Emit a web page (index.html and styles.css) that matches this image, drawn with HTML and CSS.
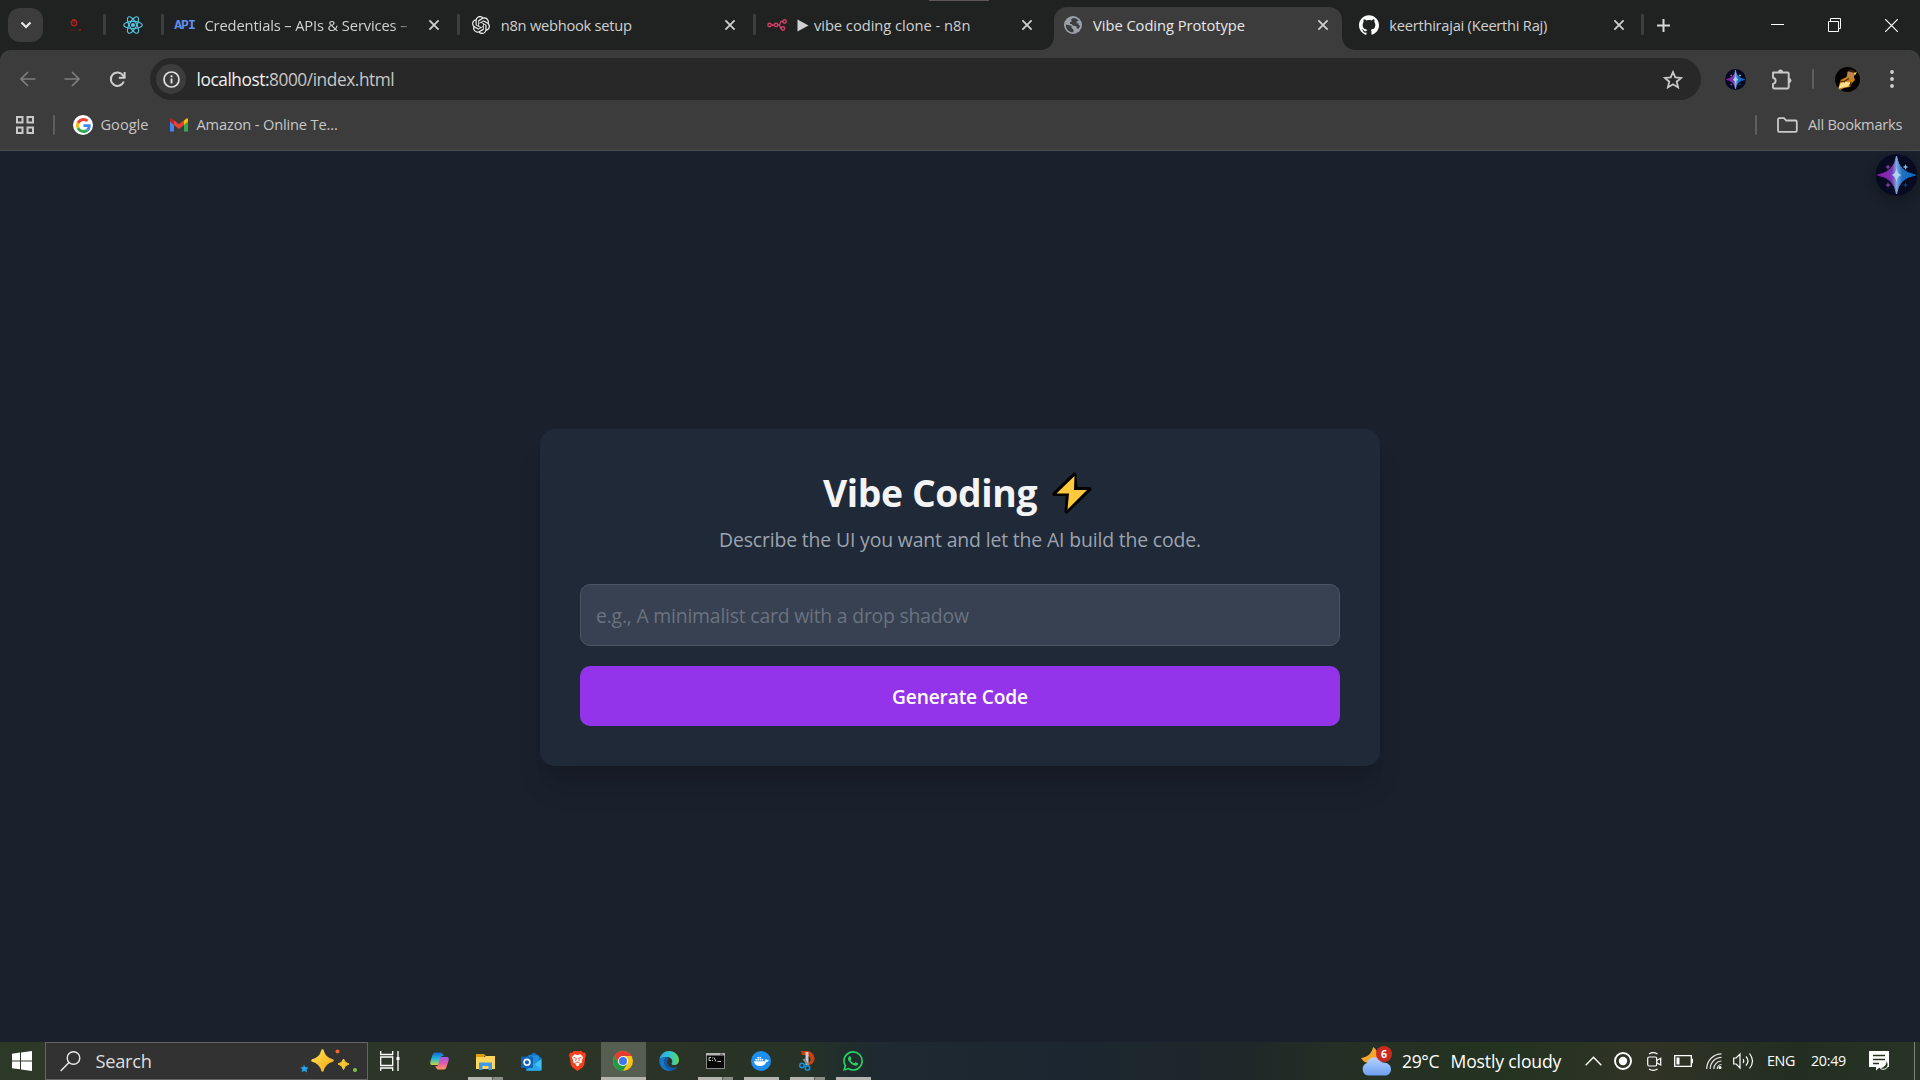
FILE: index.html
```html
<!DOCTYPE html>
<html lang="en">
<head>
<meta charset="utf-8">
<title>Vibe Coding Prototype</title>
<link rel="stylesheet" href="styles.css">
</head>
<body>
<svg class="defs" width="0" height="0">
  <defs>
    <linearGradient id="spark" x1="0" y1="0" x2="1" y2="0"><stop offset="0" stop-color="#8a1ca8"/><stop offset=".38" stop-color="#7a34b4"/><stop offset=".5" stop-color="#7fa8e0"/><stop offset=".65" stop-color="#1f6fc4"/><stop offset="1" stop-color="#0a6cc0"/></linearGradient>
    <linearGradient id="gold" x1="0" y1="0" x2="1" y2="1"><stop offset="0" stop-color="#ffe14d"/><stop offset="1" stop-color="#f5a81c"/></linearGradient>
    <linearGradient id="cop1" x1="0" y1="0" x2="0" y2="1"><stop offset="0" stop-color="#1568d6"/><stop offset=".5" stop-color="#22b5d8"/><stop offset="1" stop-color="#c8d63a"/></linearGradient>
    <linearGradient id="cop2" x1="0" y1="0" x2="0" y2="1"><stop offset="0" stop-color="#9a5cf0"/><stop offset=".5" stop-color="#e05aa8"/><stop offset="1" stop-color="#ff9a5c"/></linearGradient>
    <linearGradient id="edge1" x1="0" y1="0" x2="1" y2="0"><stop offset="0" stop-color="#2aa6e8"/><stop offset=".6" stop-color="#34c8c8"/><stop offset="1" stop-color="#66d84e"/></linearGradient>
    <linearGradient id="cloud" x1="0" y1="0" x2="0" y2="1"><stop offset="0" stop-color="#b5d2ff"/><stop offset="1" stop-color="#6d9ff0"/></linearGradient>
    <symbol id="close" viewBox="0 0 12 12"><path d="M1.4 1.4l9.2 9.2M10.6 1.4l-9.2 9.2" fill="none" stroke="currentColor" stroke-width="1.8"/></symbol>
    <symbol id="assistant" viewBox="0 0 42 42"><circle cx="21" cy="21" r="21" fill="#070a20"/><path d="M21 2Q23 18 40 21Q23 24 21 40Q19 24 2 21Q19 18 21 2Z" fill="url(#spark)" stroke="url(#spark)" stroke-width="1"/><path d="M21 14q1 6 5 7q-4 1-5 7q-1-6-5-7q4-1 5-7z" fill="#a8d4f0"/><path d="M12.500 10l.8 2.200 2.200.8-2.200.8-.8 2.200-.8-2.200-2.200-.8 2.200-.8zM12.500 28l.8 2.200 2.200.8-2.200.8-.8 2.200-.8-2.200-2.200-.8 2.200-.8z" fill="#8a3fae"/><path d="M30 10l.8 2.200 2.200.8-2.200.8-.8 2.200-.8-2.200-2.200-.8 2.200-.8z" fill="#8fc4e4"/><path d="M30 28l.8 2.200 2.200.8-2.200.8-.8 2.200-.8-2.200-2.200-.8 2.200-.8z" fill="#103c70"/></symbol>
  </defs>
</svg>

<header class="browser">
  <div class="tabstrip">
    <span class="drag-hint"></span>
    <div class="tab-search"><svg width="12" height="8" viewBox="0 0 12 8"><path d="M1.500 1.500L6 6l4.500-4.500" fill="none" stroke="#e8e8e8" stroke-width="2.200"/></svg></div>
    <div class="tab pinned first"><svg width="16" height="16" viewBox="0 0 16 16"><circle cx="8" cy="6" r="2.700" fill="none" stroke="#b3201d" stroke-width="1.400"/><path d="M6.500 2.500h3M8 4.500v2" stroke="#b3201d"/><path d="M2 13h10" stroke="#4b2322" stroke-width=".8"/><circle cx="14" cy="13" r="1" fill="#a3201d"/></svg></div>
    <div class="tab pinned"><svg width="20" height="20" viewBox="0 0 20 20" fill="none" stroke="#53c1de" stroke-width="1.200"><ellipse cx="10" cy="10" rx="9.300" ry="3.600"/><ellipse cx="10" cy="10" rx="9.300" ry="3.600" transform="rotate(60 10 10)"/><ellipse cx="10" cy="10" rx="9.300" ry="3.600" transform="rotate(120 10 10)"/><circle cx="10" cy="10" r="1.500" fill="#53c1de"/></svg></div>
    <div class="tab"><span class="fav api">API</span><span class="label fade creds">Credentials – APIs &amp; Services –</span><svg class="x" width="12" height="12"><use href="#close"/></svg></div>
    <div class="tab"><span class="fav"><svg width="18" height="18" viewBox="0 0 24 24" fill="#f2f2f2"><path d="M22.2819 9.8211a5.9847 5.9847 0 0 0-.5157-4.9108 6.0462 6.0462 0 0 0-6.5098-2.9A6.0651 6.0651 0 0 0 4.9807 4.1818a5.9847 5.9847 0 0 0-3.9977 2.9 6.0462 6.0462 0 0 0 .7427 7.0966 5.98 5.98 0 0 0 .511 4.9107 6.051 6.051 0 0 0 6.5146 2.9001A5.9847 5.9847 0 0 0 13.2599 24a6.0557 6.0557 0 0 0 5.7718-4.2058 5.9894 5.9894 0 0 0 3.9977-2.9001 6.0557 6.0557 0 0 0-.7475-7.0729zm-9.022 12.6081a4.4755 4.4755 0 0 1-2.8764-1.0408l.1419-.0804 4.7783-2.7582a.7948.7948 0 0 0 .3927-.6813v-6.7369l2.02 1.1686a.071.071 0 0 1 .038.052v5.5826a4.504 4.504 0 0 1-4.4945 4.4944zm-9.6607-4.1254a4.4708 4.4708 0 0 1-.5346-3.0137l.142.0852 4.783 2.7582a.7712.7712 0 0 0 .7806 0l5.8428-3.3685v2.3324a.0804.0804 0 0 1-.0332.0615L9.74 19.9502a4.4992 4.4992 0 0 1-6.1408-1.6464zM2.3408 7.8956a4.485 4.485 0 0 1 2.3655-1.9728V11.6a.7664.7664 0 0 0 .3879.6765l5.8144 3.3543-2.0201 1.1685a.0757.0757 0 0 1-.071 0l-4.8303-2.7865A4.504 4.504 0 0 1 2.3408 7.872zm16.5963 3.8558L13.1038 8.364 15.1192 7.2a.0757.0757 0 0 1 .071 0l4.8303 2.7913a4.4944 4.4944 0 0 1-.6765 8.1042v-5.6772a.79.79 0 0 0-.407-.667zm2.0107-3.0231l-.142-.0852-4.7735-2.7818a.7759.7759 0 0 0-.7854 0L9.409 9.2297V6.8974a.0662.0662 0 0 1 .0284-.0615l4.8303-2.7866a4.4992 4.4992 0 0 1 6.6802 4.66zM8.3065 12.863l-2.02-1.1638a.0804.0804 0 0 1-.038-.0567V6.0742a4.4992 4.4992 0 0 1 7.3757-3.4537l-.142.0805L8.704 5.459a.7948.7948 0 0 0-.3927.6813zm1.0976-2.3654l2.602-1.4998 2.6069 1.4998v2.9994l-2.5974 1.4997-2.6067-1.4997Z"/></svg></span><span class="label webhook">n8n webhook setup</span><svg class="x" width="12" height="12"><use href="#close"/></svg></div>
    <div class="tab nosep"><span class="fav"><svg width="20" height="12" viewBox="0 0 20 12" fill="none" stroke="#d03f66" stroke-width="1.400"><circle cx="2.600" cy="6" r="1.700"/><circle cx="9" cy="6" r="1.700"/><circle cx="17.600" cy="2.500" r="1.700"/><circle cx="16" cy="9.500" r="1.700"/><path d="M4.300 6h3M10.700 6h1.300c1.500 0 .8-3.500 2.500-3.500h1.400M12 6c1.500 0 .8 3.500 2.300 3.500"/></svg></span><span class="label clone"><svg class="play" width="12" height="13" viewBox="0 0 12 13"><path d="M.5.500l11 6-11 6z" fill="#d0d0d0"/></svg>vibe coding clone - n8n</span><svg class="x" width="12" height="12"><use href="#close"/></svg></div>
    <div class="tab active"><span class="fav"><svg width="18" height="18" viewBox="0 0 18 18"><circle cx="9" cy="9" r="9" fill="#9aa0a9"/><path d="M1.800 8.500l5.700 1.200v2l2 2v2.600C5 16.600 1.600 13.300 1.800 8.500zM7 3.500l2-1.600c2.500 0 4.600 1.200 5.800 3l-2.300.6v1.700l2.600.3-.8 1.300 1.900 1.300-1.600 2.700-1.800-.5-.6-2.400-3-.1-1.600-1.700H6V6.200l1.800-.6z" fill="#3c3c3c"/></svg></span><span class="label proto">Vibe Coding Prototype</span><svg class="x" width="12" height="12"><use href="#close"/></svg></div>
    <div class="tab"><span class="fav"><svg width="20" height="20" viewBox="0 0 24 24" fill="#fff"><path d="M12 .297c-6.630 0-12 5.373-12 12 0 5.303 3.438 9.800 8.205 11.385.6.113.82-.258.82-.577 0-.285-.01-1.040-.015-2.040-3.338.724-4.042-1.610-4.042-1.610C4.422 18.070 3.633 17.700 3.633 17.700c-1.087-.744.084-.729.084-.729 1.205.084 1.838 1.236 1.838 1.236 1.070 1.835 2.809 1.305 3.495.998.108-.776.417-1.305.76-1.605-2.665-.3-5.466-1.332-5.466-5.930 0-1.310.465-2.380 1.235-3.220-.135-.303-.54-1.523.105-3.176 0 0 1.005-.322 3.300 1.230.96-.267 1.980-.399 3-.405 1.020.006 2.040.138 3 .405 2.280-1.552 3.285-1.230 3.285-1.230.645 1.653.24 2.873.12 3.176.765.84 1.230 1.910 1.230 3.220 0 4.610-2.805 5.625-5.475 5.920.42.36.81 1.096.81 2.220 0 1.606-.015 2.896-.015 3.286 0 .315.21.69.825.57C20.565 22.092 24 17.592 24 12.297c0-6.627-5.373-12-12-12"/></svg></span><span class="label keerthi">keerthirajai (Keerthi Raj)</span><svg class="x" width="12" height="12"><use href="#close"/></svg></div>
    <svg class="newtab" width="13" height="13" viewBox="0 0 13 13"><path d="M6.500 0v13M0 6.500h13" stroke="#d8d8d8" stroke-width="2"/></svg>
    <div class="winctl">
      <svg width="13" height="13" viewBox="0 0 13 13"><path d="M0 5.500h13" stroke="#fff"/></svg>
      <svg width="13" height="14" viewBox="0 0 13 14" fill="none" stroke="#fff"><path d="M.5 3.500h10v10H.5zM2.500 3V.5h10v10H11"/></svg>
      <svg width="13" height="13" viewBox="0 0 13 13"><path d="M0 0l13 13M13 0L0 13" stroke="#fff" stroke-width="1.200"/></svg>
    </div>
  </div>

  <div class="toolbar">
    <svg class="back" width="16" height="16" viewBox="0 0 16 16"><path d="M15.500 8H1.500M8 1L1 8l7 7" fill="none" stroke="#7d7d7d" stroke-width="1.700"/></svg>
    <svg class="fwd" width="16" height="16" viewBox="0 0 16 16"><path d="M.5 8h14M8 1l7 7-7 7" fill="none" stroke="#7d7d7d" stroke-width="1.700"/></svg>
    <svg class="reload" width="17" height="17" viewBox="0 0 17 17"><path d="M14.800 10.500A6.700 6.700 0 1 1 14 4.300L15.500 6" fill="none" stroke="#cfcfcf" stroke-width="2"/><path d="M15.600 1v5.700H9.800" fill="none" stroke="#cfcfcf" stroke-width="2"/></svg>
    <div class="omnibox">
      <span class="info"><svg width="17" height="17" viewBox="0 0 17 17"><circle cx="8.500" cy="8.500" r="7.500" fill="none" stroke="#e0e0e0" stroke-width="1.700"/><path d="M8.500 7.500v5M8.500 4.300v2" stroke="#e0e0e0" stroke-width="1.900"/></svg></span>
      <span class="url"><b>localhost:</b>8000/index.html</span>
      <svg class="star" width="20" height="19" viewBox="0 0 20 19"><path d="M10 2l2.300 5.400 5.900.5-4.500 3.800 1.400 5.700-5.100-3.100-5.100 3.100 1.400-5.700L1.800 7.900l5.900-.5z" fill="none" stroke="#c9c9c9" stroke-width="1.800"/></svg>
    </div>
    <svg class="ext" width="21" height="21"><use href="#assistant"/></svg>
    <svg class="puzzle" width="21" height="21" viewBox="0 0 21 21"><path d="M2 3.500h14.500a1.200 1.200 0 0 1 1.200 1.200v13.600a1.200 1.200 0 0 1-1.200 1.200H3.200A1.200 1.200 0 0 1 2 18.300V15a3.200 3.200 0 0 0 0-6.300z" fill="none" stroke="#c9c9c9" stroke-width="1.900" stroke-linejoin="round"/><path d="M7 3a2.500 2.500 0 0 1 5 0zM18 9a2.500 2.500 0 0 1 0 5z" fill="#c9c9c9"/></svg>
    <i class="vbar"></i>
    <svg class="avatar" width="25" height="25" viewBox="0 0 25 25"><circle cx="12.500" cy="12.500" r="12.500" fill="#050302"/><path d="M3.500 21l2-8 6-3 1.500-5 3-2 4 2-1 5 1 3-3 3-2 4-6 1-4 2z" fill="#c98213"/><path d="M12.500 5l3-2 3.500 2-.5 5-3 2-3-2z" fill="#c4834a"/><path d="M13 4.500l3-2 3.500 1.500-.5 2-3-1z" fill="#3a1c0a"/><path d="M3.500 21.500l2-5 4-2 6.500 1-3 4-5 1zM19 6.500l3-2-2 4z" fill="#ffe08a"/><path d="M9 14.500l5-3M5 14l5 1M16 15l-1 4" stroke="#4a2506" stroke-width="1.200"/></svg>
    <svg class="menu" width="4" height="18" viewBox="0 0 4 18" fill="#cfcfcf"><circle cx="2" cy="2" r="1.900"/><circle cx="2" cy="9" r="1.900"/><circle cx="2" cy="16" r="1.900"/></svg>
  </div>

  <div class="bookmarks">
    <svg class="apps" width="18" height="18" viewBox="0 0 18 18" fill="none" stroke="#c9c9c9" stroke-width="2"><path d="M1 1h5.500v5.500H1zM11.500 1H17v5.500h-5.500zM1 11.500h5.500V17H1zM11.500 11.500H17V17h-5.500z"/></svg>
    <i class="vbar"></i>
    <span class="glogo"><svg width="15" height="15" viewBox="0 0 48 48"><path fill="#EA4335" d="M24 9.500c3.540 0 6.710 1.220 9.210 3.600l6.850-6.850C35.900 2.380 30.470 0 24 0 14.620 0 6.510 5.380 2.560 13.220l7.980 6.190C12.430 13.720 17.740 9.500 24 9.500z"/><path fill="#4285F4" d="M46.980 24.550c0-1.570-.15-3.090-.38-4.550H24v9.020h12.940c-.58 2.960-2.260 5.480-4.780 7.180l7.730 6c4.510-4.180 7.090-10.360 7.090-17.650z"/><path fill="#FBBC05" d="M10.530 28.590c-.48-1.450-.76-2.990-.76-4.590s.27-3.140.76-4.590l-7.980-6.190C.92 16.460 0 20.120 0 24c0 3.880.92 7.540 2.560 10.780l7.970-6.190z"/><path fill="#34A853" d="M24 48c6.480 0 11.930-2.130 15.890-5.810l-7.730-6c-2.150 1.450-4.920 2.300-8.160 2.300-6.260 0-11.570-4.220-13.470-9.910l-7.980 6.190C6.510 42.620 14.620 48 24 48z"/></svg></span>
    <span class="bm google">Google</span>
    <svg class="gmail" width="18" height="14" viewBox="0 0 18 14"><path d="M0 2v11.500h4V6z" fill="#4285f4"/><path d="M18 2v11.500h-4V6z" fill="#34a853"/><path d="M14 2.500L16 .7c1-.8 2-.2 2 1.300v1.500L14 7z" fill="#fbbc04"/><path d="M0 3.500V2C0 .5 1 0 2 .7L4 2.300V7z" fill="#c5221f"/><path d="M4 2.200l5 4 5-4V7l-5 4-5-4z" fill="#ea4335"/></svg>
    <span class="bm amazon">Amazon - Online Te...</span>
    <i class="vbar right"></i>
    <svg class="folder" width="21" height="16" viewBox="0 0 21 16"><path d="M1 2.500A1.300 1.300 0 0 1 2.300 1.200H7l2.200 2.300h9.300a1.300 1.300 0 0 1 1.300 1.300v8.700a1.300 1.300 0 0 1-1.300 1.300H2.300A1.300 1.300 0 0 1 1 13.500z" fill="none" stroke="#c9c9c9" stroke-width="1.800"/></svg>
    <span class="bm all">All Bookmarks</span>
  </div>
</header>

<main class="page">
  <svg class="floating" width="43" height="42" viewBox="0 0 42 42"><use href="#assistant"/></svg>
  <section class="card">
    <h1><span>Vibe Coding</span><svg class="bolt" width="40" height="42" viewBox="0 0 40 42"><path d="M22.500 2.500L2.500 22h13.500L14.500 39.500 37.500 17H23.500z" fill="#ffc83d" stroke="#000" stroke-width="4" stroke-linejoin="round"/><path d="M22.500 4L4.500 21.500h12.500L15.500 37.500 35 18H22z" fill="#ffc83d"/></svg></h1>
    <p class="sub">Describe the UI you want and let the AI build the code.</p>
    <div class="field">e.g., A minimalist card with a drop shadow</div>
    <button class="generate">Generate Code</button>
  </section>
</main>

<footer class="taskbar">
  <div class="start"><svg width="20" height="20" viewBox="0 0 20 20" fill="#fff"><path d="M0 2.700L8 1.600V9.400H0zM9 1.500L20 0v9.400H9zM0 10.400h8v7.900l-8-1.100zM9 10.400h11V20L9 18.500z"/></svg></div>
  <div class="search">
    <svg width="21" height="21" viewBox="0 0 21 21"><circle cx="13.500" cy="7" r="6.300" fill="none" stroke="#e8e8e8" stroke-width="1.400"/><path d="M9 11.500L.7 20" stroke="#e8e8e8" stroke-width="1.500"/></svg>
    <span class="stext">Search</span>
    <svg class="sparkles" width="58" height="24" viewBox="0 0 58 24"><path d="M22.500 1.500Q24.500 9.500 32.500 11.500Q24.500 13.500 22.500 21.500Q20.500 13.500 12.500 11.500Q20.500 9.500 22.500 1.500Z" fill="url(#gold)" stroke="url(#gold)" stroke-width="2.500" stroke-linejoin="round"/><path d="M43.500 10q1 4 5.500 5q-4.500 1-5.500 5.500q-1-4.500-5.500-5.500q4.500-1 5.500-5z" fill="#fbc730" stroke="#fbc730"/><path d="M4 15.500l1 2.500 3.500.5-2 2 .5 3-2.500-1.500-3 1 1-2.500-2-2 2.700-.5z" fill="#22a7ee"/><circle cx="37.500" cy="2.500" r="2" fill="#f4682a"/><circle cx="55" cy="21" r="2" fill="#82c341"/></svg>
  </div>
  <div class="app view"><svg width="20" height="20" viewBox="0 0 20 20" fill="none" stroke="#fff" stroke-width="1.300"><path d="M.7 0v3.500h12V0M.7 6h12v8.500h-12zM.7 20v-3h12v3M18 0v20"/><path d="M16.500 6h3v3h-3z" fill="#fff" stroke="none"/></svg></div>
  <div class="app"><svg width="19" height="18" viewBox="0 0 19 18"><path d="M5 .5h6.500l2.500 3-3 1-2.500 8.500H2C0 13 0 11 .5 9L2.500 3C3 1.500 3.500.5 5 .5z" fill="url(#cop1)"/><path d="M14 17.500H7.500l-2.500-3 3-1 2.500-8.500H17c2 0 2 2 1.500 4l-2 6c-.5 1.500-1 2.500-2.500 2.500z" fill="url(#cop2)"/></svg></div>
  <div class="app open multi"><svg width="19" height="17" viewBox="0 0 19 17"><path d="M0 1h8l2 2h-2v4H0z" fill="#e0a100"/><path d="M0 4h8l2-1h9v13H0z" fill="#ffd65c"/><path d="M3 17V9.500h13V17h-3.500v-4h-6v4z" fill="#3f9be8"/></svg></div>
  <div class="app"><svg width="21" height="19" viewBox="0 0 21 19"><path d="M4 6L13 .5 20.500 6v12.500H5z" fill="#1272c8"/><path d="M7 3.500h11V12H7z" fill="#1f8fdc"/><path d="M5 18.500L20.500 7v10c0 1-.5 1.500-1.500 1.500z" fill="#3cc0f5"/><path d="M12 11l8.500 6.500-1.500 1H6z" fill="#28a8ea"/><rect y="4.500" width="12" height="11.500" rx="1" fill="#0f64b8"/><circle cx="6" cy="10.300" r="2.900" fill="none" stroke="#fff" stroke-width="1.600"/></svg></div>
  <div class="app"><svg width="17" height="20" viewBox="0 0 17 20"><path d="M4.500 0h8l1.500 1.800 2-.2 1 3-.8 1.900-1 7.200-1.700 2.800-5 3.500-5-3.500-1.700-2.800-1-7.200L0 4.600l1-3 2 .2z" fill="#fb3f1c"/><path d="M5.500 3.300l3 .7 3-.7 2.700 3-1.500 3.200.3 2-3.300 1.500.8.8-2 1.800-2-1.800.8-.8L4 11.500l.3-2L2.800 6.300z" fill="#fff"/><path d="M4.500 6.500l2.800.8-.6 2.700M12.500 6.500l-2.800.8.6 2.700M6.500 11.700l2-.7 2 .7" fill="none" stroke="#fb3f1c" stroke-width=".9"/></svg></div>
  <div class="app open current"><svg width="20" height="20" viewBox="0 0 20 20"><circle cx="10" cy="10" r="10" fill="#fbc116"/><path d="M1.340 5A10 10 0 0 1 18.660 5H10L5.670 12.500z" fill="#e33b2e"/><path d="M1.340 5A10 10 0 0 0 10 20l4.330-7.500H5.670z" fill="#229a45"/><circle cx="10" cy="10" r="5" fill="#fff"/><circle cx="10" cy="10" r="4" fill="#3c78e8"/></svg></div>
  <div class="app"><svg width="20" height="20" viewBox="0 0 20 20"><path d="M.5 8C1.500 3.500 5.300 0 10.200 0 15.500 0 20 4 20 9c0 3-2 5-4.800 5-1.600 0-2.700-.5-2.700-1.300 0-.6.800-1 .8-2.500C13.300 8 11 6 8 6 4.500 6 1.500 7 .5 8z" fill="url(#edge1)"/><path d="M.3 8.500C2 6.500 5 5.700 7.800 6 5.500 7.500 5 10 5.500 12.500c.7 3.500 3.500 6 7 7.200-1 .3-1.600.3-2.500.3C4.500 20-.5 15 .3 8.500z" fill="#1677c9"/><path d="M7.800 6C5 7.500 4.800 10.500 5.500 13c.8 3.500 3.500 6 7 6.700 3-.6 5-2 6.300-4-1.500.8-3.500 1.100-5.500.8C9 15.800 6.500 11.500 9.500 7z" fill="#1258a4"/></svg></div>
  <div class="app open multi"><svg width="19" height="16" viewBox="0 0 19 16"><rect x=".5" y=".5" width="18" height="15" fill="#080808" stroke="#8a8a8a"/><path d="M0 0h19v2.500H0z" fill="#b5b5b5"/><path d="M14 1.200h3" stroke="#555"/><path d="M5 4.500H3v3h2M6.500 4.500v1M6.500 7v1M8 4.500l2 4M11.500 8.500h3.500" stroke="#ddd" fill="none" stroke-width=".9"/></svg></div>
  <div class="app open"><svg width="20" height="20" viewBox="0 0 20 20"><circle cx="10" cy="10" r="10" fill="#1d8fef"/><path d="M3 10.300h10.800c.8-.3.6-1.300.3-1.900.9-.7 1.700.1 1.900.7.700-.2 1.300-.1 1.700.3-.5 1-1.300 1.400-2.300 1.300-1 2.800-3 4.300-6.200 4.300C5.300 15 3.200 13.500 3 10.300zM4.300 8h1.600v1.500H4.300zM6.400 8H8v1.500H6.400zM8.500 8h1.600v1.500H8.500zM10.600 8h1.600v1.500h-1.600zM6.400 6H8v1.500H6.400zM8.500 6h1.600v1.500H8.500z" fill="#fff"/></svg></div>
  <div class="app open multi"><svg width="16" height="20" viewBox="0 0 16 20"><path d="M2 0h7c4 1 6.500 4 6.500 7.500S13.500 13 11 14L9 12c2-1 3-2.500 2.500-4.500S8.500 4 6 4H3z" fill="#d13f10"/><path d="M6.500 1h3v13h-3z" fill="#c9ccd0"/><path d="M3.500 8.500l2-1 5 6.500-1.500 1z" fill="#8b8f94"/><circle cx="3" cy="14.500" r="2.200" fill="none" stroke="#1a8fe0" stroke-width="1.600"/><circle cx="8.500" cy="17" r="2.200" fill="none" stroke="#1a8fe0" stroke-width="1.600"/></svg></div>
  <div class="app open"><svg width="20" height="20" viewBox="0 0 24 24" fill="#25d366"><path d="M17.472 14.382c-.297-.149-1.758-.867-2.030-.967-.273-.099-.471-.148-.67.15-.197.297-.767.966-.94 1.164-.173.199-.347.223-.644.075-.297-.15-1.255-.463-2.390-1.475-.883-.788-1.480-1.761-1.653-2.059-.173-.297-.018-.458.13-.606.134-.133.298-.347.446-.52.149-.174.198-.298.298-.497.099-.198.05-.371-.025-.52-.075-.149-.669-1.612-.916-2.207-.242-.579-.487-.5-.669-.51-.173-.008-.371-.01-.57-.01-.198 0-.52.074-.792.372-.272.297-1.040 1.016-1.040 2.479 0 1.462 1.065 2.875 1.213 3.074.149.198 2.096 3.200 5.077 4.487.709.306 1.262.489 1.694.625.712.227 1.360.195 1.871.118.571-.085 1.758-.719 2.006-1.413.248-.694.248-1.289.173-1.413-.074-.124-.272-.198-.57-.347m-5.421 7.403h-.004a9.870 9.870 0 0 1-5.031-1.378l-.361-.214-3.741.982.998-3.648-.235-.374a9.860 9.860 0 0 1-1.510-5.260c.001-5.450 4.436-9.884 9.888-9.884 2.640 0 5.122 1.030 6.988 2.898a9.825 9.825 0 0 1 2.893 6.994c-.003 5.450-4.437 9.884-9.885 9.884m8.413-18.297A11.815 11.815 0 0 0 12.050 0C5.495 0 .16 5.335.157 11.892c0 2.096.547 4.142 1.588 5.945L.057 24l6.305-1.654a11.882 11.882 0 0 0 5.683 1.448h.005c6.554 0 11.890-5.335 11.893-11.893a11.821 11.821 0 0 0-3.480-8.413Z"/></svg></div>

  <div class="tray">
    <span class="weather"><svg width="31" height="29" viewBox="0 0 31 29"><path d="M12 0c-1 6-5 10-12 11 3 6 12 7 15 2s1-11-3-13z" fill="#f4a72c"/><path d="M7 28.500a6.500 6.500 0 0 1-1-12.500c1-4 4-5.500 8-5.500 3.500 0 6 2 7 5 5-.5 9 2.500 9 6.500s-2.500 6.500-6 6.500z" fill="url(#cloud)"/></svg><b class="badge">6</b></span>
    <span class="tt temp">29°C</span>
    <span class="tt cond">Mostly cloudy</span>
    <svg class="chev" width="17" height="10" viewBox="0 0 17 10"><path d="M.7 9.300L8.500 1.300l7.800 8" fill="none" stroke="#fff" stroke-width="1.400"/></svg>
    <svg class="rec" width="18" height="18" viewBox="0 0 18 18"><circle cx="9" cy="9" r="8" fill="none" stroke="#fff" stroke-width="1.900"/><circle cx="9" cy="9" r="4.200" fill="#fff"/></svg>
    <svg class="cam" width="15" height="19" viewBox="0 0 15 19" fill="none" stroke="#fff" stroke-width="1.200"><rect x=".7" y="5" width="9" height="9" rx="1.500"/><path d="M9.700 8.500l4-2.300v6.800l-4-2.300M2 2c2.500-1.500 6-1.500 8.500 0M2 17c2.500 1.500 6 1.500 8.500 0"/></svg>
    <svg class="batt" width="19" height="12" viewBox="0 0 19 12"><path d="M.7.700h16.600v10.600H.7z" fill="none" stroke="#fff" stroke-width="1.300"/><path d="M2.500 2.500h3v7h-3zM18 3.800h1v4.400h-1z" fill="#fff"/></svg>
    <svg class="wifi" width="16" height="16" viewBox="0 0 16 16" fill="none" stroke="#e4e4e4" stroke-width="1.200"><path d="M.7 16C.7 7.500 7.500.8 15.500.8M4.200 16c0-6.500 5-11.700 11.300-11.700M7.800 16c0-4.500 3.500-8 7.700-8"/><path d="M11.200 16c0-2.500 1.800-4.500 4.300-4.500"/><circle cx="14" cy="14.500" r="1.500" fill="#fff" stroke="none"/></svg>
    <svg class="vol" width="21" height="18" viewBox="0 0 21 18" fill="none" stroke="#fff" stroke-width="1.200"><path d="M.7 6h2.500L7 2v14l-3.800-4H.7zM10 7q1.500 2 0 4M13 4.500q4 4.500 0 9M16.500 1.500q6 7.500 0 15"/></svg>
    <span class="tt lang">ENG</span>
    <span class="tt clock">20:49</span>
    <svg class="notif" width="21" height="20" viewBox="0 0 21 20"><path d="M0 0h20v16h-9l-4 3.500V16H0z" fill="#fff"/><path d="M4 4.500h12M4 8.500h12M4 12.500h6" stroke="#28331f" stroke-width="1.300"/><path d="M17 9.500c3 2.500 2.500 6.500 0 8s-5 1-6.500-1c4 .5 7-2.500 6.500-7z" fill="#28331f" stroke="#fff"/></svg>
    <i class="peek"></i>
  </div>
</footer>
</body>
</html>
```
FILE: styles.css
```css
* { box-sizing: border-box; }
body {
  margin: 0;
  width: 1920px;
  height: 1080px;
  overflow: hidden;
  display: flex;
  flex-direction: column;
  background: #1a202c;
  font-family: "Open Sans", "Noto Sans", sans-serif;
  color: #d0d0d0;
}
svg { flex: none; display: block; }
.defs { position: absolute; }

/* Browser chrome */
.browser { height: 151px; flex: none; background: #202221; border-bottom: 1px solid #4b4b4b; }
.tabstrip { position: relative; height: 50px; display: flex; align-items: center; background: #202221; }
.drag-hint { position: absolute; left: 929px; top: 0; width: 60px; height: 1px; background: #5d5757; }
.tab-search {
  width: 35px; height: 34px; margin: 0 3.500px 0 8px; border-radius: 12px;
  background: #3c3c3c; display: flex; align-items: center; justify-content: center;
}
.tab {
  position: relative; width: 296.200px; height: 50px; flex: none;
  display: flex; align-items: center; padding: 0 17.500px 0 13px; font-size: 14.700px;
}
.tab::after { content: ""; position: absolute; right: -2px; top: 14px; width: 3px; height: 21px; border-radius: 1px; background: #3c3e3c; }
.tab.nosep::after { display: none; }
.tab.pinned { width: 57.500px; padding: 0; justify-content: center; }
.tab.pinned.first { padding-right: 2px; }
.fav { width: 20px; height: 20px; margin-right: 10px; display: flex; align-items: center; justify-content: center; flex: none; }
.fav.api { font: bold 13px/20px "Liberation Mono", monospace; color: #5f8ff0; letter-spacing: -1px; padding-top: 2px; }
.label { flex: 1; display: flex; align-items: center; overflow: hidden; line-height: 24px; margin-right: 10px; white-space: nowrap; }
.label.creds { letter-spacing: -.13px; }
.label.webhook { letter-spacing: -.26px; }
.label.clone { letter-spacing: -.02px; }
.label.proto { letter-spacing: -.04px; }
.label.keerthi { letter-spacing: -.26px; }
.label.fade { -webkit-mask-image: linear-gradient(90deg, #000 88%, transparent); mask-image: linear-gradient(90deg, #000 88%, transparent); }
.play { margin-right: 5px; }
.tab .x { color: #cfcfcf; }
.tab.active { color: #e8e8e8; }
.tab.active::before {
  content: ""; position: absolute; left: 4px; right: 4px; top: 7px; bottom: 0;
  border-radius: 13px 13px 0 0; background: #3c3c3c;
}
.tab.active::after {
  left: -9px; right: -9px; top: auto; bottom: 0; width: auto; height: 13px; border-radius: 0;
  background:
    radial-gradient(circle at 0 0, transparent 12.500px, #3c3c3c 13.200px) left / 13px 13px no-repeat,
    radial-gradient(circle at 100% 0, transparent 12.500px, #3c3c3c 13.200px) right / 13px 13px no-repeat;
}
.tab.active > * { position: relative; }
.newtab { margin-left: 15px; }
.winctl { margin-left: auto; margin-right: 22.500px; display: flex; gap: 44px; align-items: center; }

.toolbar { height: 58px; display: flex; align-items: center; padding-left: 20px; border-radius: 10px 10px 0 0; background: #3c3c3c; }
.fwd { margin-left: 28px; }
.reload { margin-left: 29px; }
.omnibox { width: 1551px; height: 42px; margin-left: 24px; border-radius: 21px; background: #282828; display: flex; align-items: center; padding: 0 18.500px 0 6px; }
.info { width: 30px; height: 30px; border-radius: 50%; background: #3c3c3c; display: flex; align-items: center; justify-content: center; }
.url { font-size: 17.300px; letter-spacing: -.44px; margin-left: 10.500px; flex: 1; color: #c7c7c7; padding-top: 1px; }
.url b { font-weight: 400; color: #f0f0f0; }
.ext { margin-left: 24px; }
.puzzle { margin-left: 25px; }
.vbar { width: 2px; height: 20px; border-radius: 1px; background: #5e5e5e; }
.toolbar .vbar { margin-left: 20px; }
.avatar { margin-left: 21px; }
.menu { margin-left: 30px; }

.bookmarks { height: 42px; display: flex; align-items: center; padding: 0 0 8px 15.500px; font-size: 14.600px; color: #c7c7c7; background: #3c3c3c; }
.bm { white-space: nowrap; line-height: 20px; margin-top: -2px; }
.apps + .vbar { margin-left: 19px; }
.glogo { width: 20px; height: 20px; border-radius: 50%; background: #fff; margin-left: 18.500px; display: flex; align-items: center; justify-content: center; }
.bm.google { margin-left: 7.500px; width: 48px; }
.gmail { margin-left: 21.500px; }
.bm.amazon { margin-left: 8.500px; letter-spacing: -.14px; }
.vbar.right { margin-left: auto; }
.folder { margin-left: 20px; }
.bm.all { margin-left: 10px; width: 112px; letter-spacing: -.24px; }

/* Prototype page */
.page { position: relative; flex: 1; display: flex; align-items: center; justify-content: center; padding-top: 2px; background: #1a202c; }
.floating { position: absolute; right: 2px; top: 3px; border-radius: 50%; box-shadow: 0 4px 12px rgba(0,0,0,.3); }
.card {
  width: 840px; height: 337px; padding: 40px; border-radius: 15px; background: #1f2937;
  box-shadow: 0 25px 31px -6px rgba(0,0,0,.1), 0 12px 12px -6px rgba(0,0,0,.1);
  display: flex; flex-direction: column;
}
h1 { margin: 0 0 10px; height: 45px; padding-right: 5px; display: flex; align-items: center; justify-content: center; font-size: 37.300px; line-height: 45px; letter-spacing: -.38px; font-weight: 700; color: #f3f4f6; }
h1 span { padding-top: 2px; }
.bolt { margin: 3px 0 0 15px; }
.sub { margin: 0 0 30px; text-align: center; font-size: 19.400px; line-height: 32px; height: 30px; letter-spacing: -.15px; color: #9ca3af; }
.field { height: 62px; margin-bottom: 20px; padding: 0 15px; border: 1px solid #4b5563; border-radius: 10px; background: #374151; font-size: 19.400px; line-height: 62px; letter-spacing: -.21px; color: #6b7280; }
.generate { height: 60px; border: 0; border-radius: 10px; background: #9333ea; color: #fff; font: 600 19.200px/60px "Open Sans", sans-serif; letter-spacing: -.17px; padding: 1px 0 0; }

/* Taskbar */
.taskbar {
  height: 38px; flex: none; display: flex; align-items: stretch; color: #fff;
  background: linear-gradient(90deg, #2d3928 0, #2c3527 420px, #2a3325 700px, #263326 800px, #1e2931 880px, #1c2630 1080px, #1e2828 1250px, #253024 1350px, #243321 1500px, #303326 1650px, #222e20 1800px, #283526 1920px);
}
.start { width: 45px; display: flex; align-items: center; justify-content: center; padding-right: 1px; }
.search { width: 323px; border: 1px solid #656565; background: #323232; display: flex; align-items: center; padding: 0 9px 0 14px; }
.stext { font-size: 18.300px; letter-spacing: -.3px; line-height: 24px; margin: -1px 0 0 14.500px; flex: 1; color: #dedede; }
.app { position: relative; width: 46px; display: flex; align-items: center; justify-content: center; }
.app.view { width: 48px; padding-right: 4px; }
.app.open::after { content: ""; position: absolute; left: 5.500px; right: 5.500px; bottom: 0; height: 3px; background: #b4b5ae; }
.app.multi::after { background: linear-gradient(90deg, #b4b5ae 24px, #5a5d54 24px, #5a5d54 25px, #8a8c86 25px); }
.app.current { width: 45px; margin-left: 1px; padding-right: 1px; background: #565e52; }
.app.current::after { left: 0; right: 0; }
.tray { margin-left: auto; display: flex; align-items: center; }
.weather { position: relative; }
.badge { position: absolute; left: 15px; top: -1px; width: 16px; height: 16px; border-radius: 50%; background: #cb2a20; font-size: 10.500px; line-height: 16px; text-align: center; }
.tt { display: block; white-space: nowrap; line-height: 24px; margin-top: -1px; }
.tt.temp { margin-left: 10px; width: 37px; font-size: 17.600px; letter-spacing: -.38px; }
.tt.cond { margin-left: 11.500px; width: 110px; font-size: 17.600px; letter-spacing: -.15px; }
.chev { margin-left: 24.500px; }
.rec { margin-left: 12px; }
.cam { margin-left: 15px; }
.batt { margin-left: 12px; }
.wifi { margin-left: 13px; }
.vol { margin-left: 11px; }
.tt.lang { margin-left: 13px; width: 28px; font-size: 14.300px; letter-spacing: -.35px; }
.tt.clock { margin-left: 16px; width: 35px; font-size: 14.300px; letter-spacing: -.3px; }
.notif { margin-left: 23px; }
.peek { width: 1px; height: 38px; margin: 0 5px 0 24px; background: #7b8378; }
```
